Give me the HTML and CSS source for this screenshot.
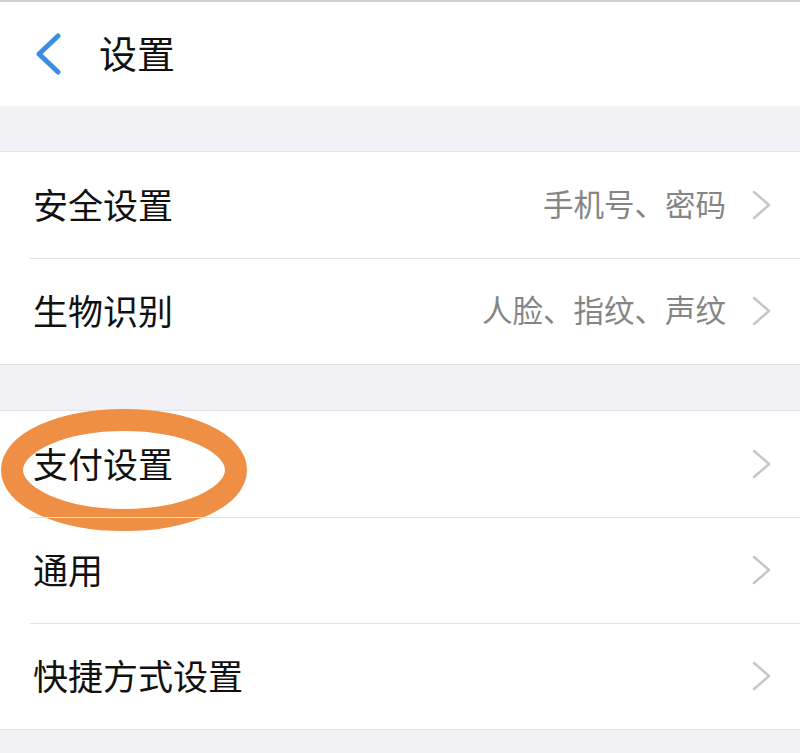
FILE: index.html
```html
<!DOCTYPE html>
<html>
  <head>
    <meta charset="utf-8">
    <title>设置</title>
    <link rel="stylesheet" href="styles.css">
  </head>
  <body>
    <header class="nav">
      <svg class="back" width="28" height="42" viewBox="0 0 28 42">
        <polyline points="24,3 5,21 24,39" fill="none" stroke="#3a8de3" stroke-width="5" stroke-linecap="round" stroke-linejoin="round"/>
      </svg>
      <h1>设置</h1>
    </header>
    <div class="band"></div>
    <ul class="group">
      <li class="row">
        <span class="label">安全设置</span>
        <span class="detail">手机号、密码</span>
        <svg class="chev" width="20" height="30" viewBox="0 0 20 30"><polyline points="2,2 17,15 2,28" fill="none" stroke="#c6c6c8" stroke-width="2.5" stroke-linecap="round" stroke-linejoin="round"/></svg>
      </li>
      <li class="row">
        <span class="label">生物识别</span>
        <span class="detail">人脸、指纹、声纹</span>
        <svg class="chev" width="20" height="30" viewBox="0 0 20 30"><polyline points="2,2 17,15 2,28" fill="none" stroke="#c6c6c8" stroke-width="2.5" stroke-linecap="round" stroke-linejoin="round"/></svg>
      </li>
    </ul>
    <div class="band"></div>
    <ul class="group">
      <li class="row">
        <span class="label">支付设置</span>
        <svg class="chev" width="20" height="30" viewBox="0 0 20 30"><polyline points="2,2 17,15 2,28" fill="none" stroke="#c6c6c8" stroke-width="2.5" stroke-linecap="round" stroke-linejoin="round"/></svg>
        <svg class="circle" width="252" height="126" viewBox="0 0 252 126">
          <ellipse cx="125" cy="61" rx="112" ry="50" fill="none" stroke="#ef8e45" stroke-width="22"/>
        </svg>
      </li>
      <li class="row">
        <span class="label">通用</span>
        <svg class="chev" width="20" height="30" viewBox="0 0 20 30"><polyline points="2,2 17,15 2,28" fill="none" stroke="#c6c6c8" stroke-width="2.5" stroke-linecap="round" stroke-linejoin="round"/></svg>
      </li>
      <li class="row">
        <span class="label">快捷方式设置</span>
        <svg class="chev" width="20" height="30" viewBox="0 0 20 30"><polyline points="2,2 17,15 2,28" fill="none" stroke="#c6c6c8" stroke-width="2.5" stroke-linecap="round" stroke-linejoin="round"/></svg>
      </li>
    </ul>
    <div class="band bottom"></div>
  </body>
</html>
```

FILE: styles.css
```css
* {
  margin: 0;
  padding: 0;
  box-sizing: border-box;
}

body {
  background-color: #f2f2f6;
  color: #111;
  font-family: "Noto Sans CJK SC", "Noto Sans", sans-serif;
  width: 800px;
  overflow: hidden;
}

.nav {
  background-color: white;
  border-top: 2px solid #d2d2d4;
  height: 106px;
  display: flex;
  align-items: center;
  padding-left: 34px;
}

.nav h1 {
  font-size: 38px;
  font-weight: 400;
  margin-left: 37px;
  line-height: 1;
  position: relative;
  top: -2px;
}

.band {
  height: 45px;
}

.band.bottom {
  height: 30px;
}

.group {
  list-style-type: none;
  background-color: white;
  border-top: 1px solid #e2e2e4;
  border-bottom: 1px solid #e2e2e4;
}

.row {
  position: relative;
  height: 106px;
  display: flex;
  align-items: center;
  padding: 0 28px 0 33px;
}

.row + .row::before {
  content: '';
  position: absolute;
  left: 30px;
  right: 0;
  top: 0;
  border-top: 1px solid #e2e2e4;
}

.label {
  font-size: 35px;
  line-height: 1;
  flex: 1;
  position: relative;
  top: -2px;
  z-index: 1;
}

.detail {
  font-size: 30.5px;
  color: #858585;
  line-height: 1;
  margin-right: 26px;
  position: relative;
  top: -2px;
}

.chev {
  display: block;
}

.circle {
  position: absolute;
  left: -1px;
  top: -2px;
}
```
